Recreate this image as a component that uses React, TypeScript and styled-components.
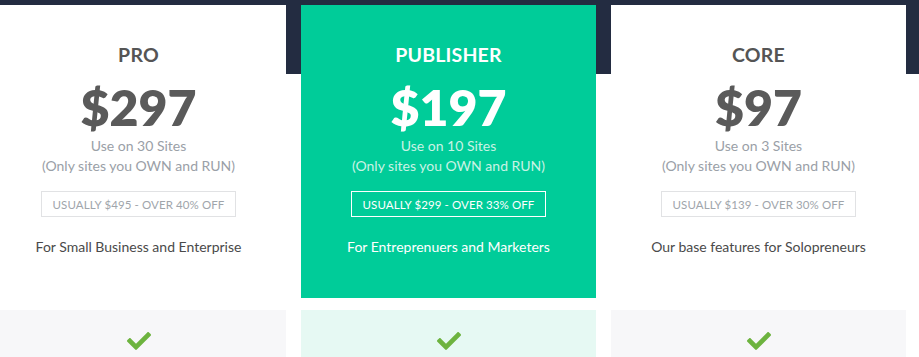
import React from "react";
import styled, { createGlobalStyle } from "styled-components";
import { FaCheck } from "react-icons/fa";

const Global = createGlobalStyle`
  html, body { margin: 0; padding: 0; background: #fff; overflow: hidden; }
  body { font-family: Lato, "Open Sans", Arial, sans-serif; }
`;

const Page = styled.div`
  width: 919px;
  height: 357px;
  overflow: hidden;
  background: linear-gradient(#232c41 0 74px, #ffffff 74px);
`;

const Grid = styled.div`
  display: grid;
  grid-template-columns: repeat(3, 295px);
  column-gap: 15px;
  margin-left: -9px;
  padding-top: 5px;
`;

const Column = styled.div`
  display: flex;
  flex-direction: column;
  gap: 12px;
`;

const Card = styled.div<{ $featured?: boolean }>`
  height: 293px;
  box-sizing: border-box;
  padding-top: 38px;
  display: flex;
  flex-direction: column;
  align-items: center;
  text-align: center;
  background: ${(p) => (p.$featured ? "#00cc99" : "#ffffff")};
`;

const Title = styled.div<{ $featured?: boolean }>`
  font-size: 19.5px;
  line-height: 24px;
  font-weight: 700;
  letter-spacing: 0.2px;
  color: ${(p) => (p.$featured ? "#ffffff" : "#555555")};
`;

const Price = styled.div<{ $featured?: boolean }>`
  margin-top: 16px;
  font-size: 50px;
  line-height: 48px;
  font-weight: 800;
  color: ${(p) => (p.$featured ? "#ffffff" : "#5a5a5a")};
`;

const Subs = styled.div`
  margin-top: 5px;
  display: flex;
  flex-direction: column;
  align-items: center;
`;

const Sub = styled.div<{ $featured?: boolean }>`
  font-size: 14px;
  line-height: 20px;
  color: ${(p) => (p.$featured ? "#c9f3e5" : "#9aa0a7")};
`;

const Badge = styled.div<{ $featured?: boolean }>`
  margin-top: 15px;
  width: 195px;
  height: 26px;
  box-sizing: border-box;
  display: flex;
  align-items: center;
  justify-content: center;
  font-size: 11.5px;
  letter-spacing: 0.1px;
  text-transform: uppercase;
  border: 1px solid ${(p) => (p.$featured ? "#ffffff" : "#e1e2e4")};
  color: ${(p) => (p.$featured ? "#ffffff" : "#a0a5ab")};
`;

const Tagline = styled.div<{ $featured?: boolean }>`
  margin-top: 20px;
  font-size: 14px;
  line-height: 20px;
  color: ${(p) => (p.$featured ? "#ffffff" : "#4a4a4a")};
`;

const FeatureRow = styled.div<{ $featured?: boolean }>`
  height: 60px;
  display: flex;
  justify-content: center;
  padding-top: 19px;
  box-sizing: border-box;
  background: ${(p) => (p.$featured ? "#e6f9f3" : "#f7f7f9")};
  color: #6db33f;
`;

type Plan = {
  name: string;
  price: string;
  sites: string;
  badge: string;
  tagline: string;
  featured?: boolean;
};

const plans: Plan[] = [
  { name: "PRO", price: "$297", sites: "Use on 30 Sites", badge: "Usually $495 - Over 40% off", tagline: "For Small Business and Enterprise" },
  { name: "PUBLISHER", price: "$197", sites: "Use on 10 Sites", badge: "Usually $299 - Over 33% off", tagline: "For Entreprenuers and Marketers", featured: true },
  { name: "CORE", price: "$97", sites: "Use on 3 Sites", badge: "Usually $139 - Over 30% off", tagline: "Our base features for Solopreneurs" },
];

export default function App() {
  return (
    <Page>
      <Global />
      <Grid>
        {plans.map((p) => (
          <Column key={p.name}>
            <Card $featured={p.featured}>
              <Title $featured={p.featured}>{p.name}</Title>
              <Price $featured={p.featured}>{p.price}</Price>
              <Subs>
                <Sub $featured={p.featured}>{p.sites}</Sub>
                <Sub $featured={p.featured}>(Only sites you OWN and RUN)</Sub>
              </Subs>
              <Badge $featured={p.featured}>{p.badge}</Badge>
              <Tagline $featured={p.featured}>{p.tagline}</Tagline>
            </Card>
            <FeatureRow $featured={p.featured}>
              <FaCheck size={24} />
            </FeatureRow>
          </Column>
        ))}
      </Grid>
    </Page>
  );
}
